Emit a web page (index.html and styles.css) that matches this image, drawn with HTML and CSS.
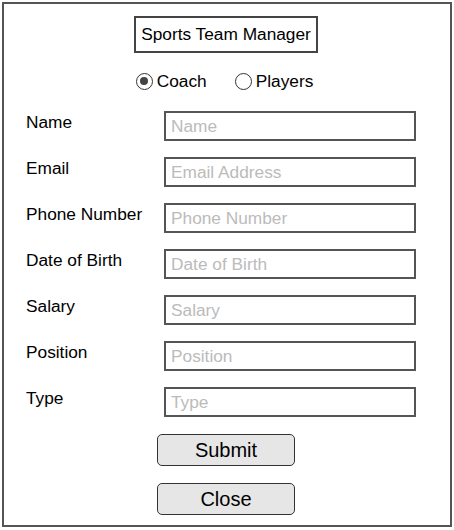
FILE: index.html
```html
<!DOCTYPE html>
<html lang="en">
<head>
    <meta charset="UTF-8">
    <meta name="viewport" content="width=device-width, initial-scale=1.0">
    <title>Sports Team Manager</title>
    <link rel="stylesheet" href="styles.css">
</head>
<body>
    <div class="frame">
        <div class="title">Sports Team Manager</div>

        <div class="roles">
            <label class="role"><span class="radio checked"></span>Coach</label>
            <label class="role"><span class="radio"></span>Players</label>
        </div>

        <form class="form">
            <div class="row">
                <label class="field-label">Name</label>
                <input type="text" class="field" placeholder="Name">
            </div>
            <div class="row">
                <label class="field-label">Email</label>
                <input type="text" class="field" placeholder="Email Address">
            </div>
            <div class="row">
                <label class="field-label">Phone Number</label>
                <input type="text" class="field" placeholder="Phone Number">
            </div>
            <div class="row">
                <label class="field-label">Date of Birth</label>
                <input type="text" class="field" placeholder="Date of Birth">
            </div>
            <div class="row">
                <label class="field-label">Salary</label>
                <input type="text" class="field" placeholder="Salary">
            </div>
            <div class="row">
                <label class="field-label">Position</label>
                <input type="text" class="field" placeholder="Position">
            </div>
            <div class="row">
                <label class="field-label">Type</label>
                <input type="text" class="field" placeholder="Type">
            </div>

            <div class="actions">
                <button type="submit" class="btn">Submit</button>
                <button type="button" class="btn">Close</button>
            </div>
        </form>
    </div>
</body>
</html>
```

FILE: styles.css
```css
body {
    margin: 0;
    font-family: "Liberation Sans", Arial, sans-serif;
    color: #000;
    background-color: white;
}
.frame {
    margin: 2px;
    height: 525px;
    box-sizing: border-box;
    border: 2px solid #555;
    padding: 12px 0 0 22px;
    display: flex;
    flex-direction: column;
}
.title {
    align-self: center;
    margin-left: -24px;
    border: 2px solid #444;
    padding: 6px 5px 7px 5px;
    font-size: 17.3px;
    line-height: 20px;
}
.roles {
    display: flex;
    justify-content: center;
    gap: 28px;
    margin: 18px 0 0 -27px;
    font-size: 17.3px;
    line-height: 20px;
}
.role {
    display: flex;
    align-items: center;
    gap: 4px;
}
.radio {
    width: 17px;
    height: 17px;
    box-sizing: border-box;
    border: 1.5px solid #333;
    border-radius: 50%;
    display: flex;
    align-items: center;
    justify-content: center;
}
.radio.checked::after {
    content: "";
    width: 8px;
    height: 8px;
    border-radius: 50%;
    background-color: #444;
}
.form {
    margin-top: 20px;
    display: flex;
    flex-direction: column;
    gap: 16px;
}
.row {
    display: flex;
    align-items: flex-start;
}
.field-label {
    width: 138px;
    padding-top: 1px;
    font-size: 17.3px;
    line-height: 20px;
}
.field {
    width: 252px;
    height: 30px;
    box-sizing: border-box;
    margin: 0;
    border: 2px solid #555;
    border-radius: 0;
    padding: 0 5px;
    font-family: "Liberation Sans", Arial, sans-serif;
    font-size: 17.3px;
}
.field::placeholder {
    color: #bbb;
}
.actions {
    margin: 1px 0 0 -24px;
    display: flex;
    flex-direction: column;
    align-items: center;
    gap: 17px;
}
.btn {
    width: 138px;
    height: 32px;
    border: 1px solid #333;
    border-radius: 5px;
    background-color: #e6e6e6;
    font-family: "Liberation Sans", Arial, sans-serif;
    font-size: 20px;
    color: #000;
    padding: 0;
    cursor: pointer;
}
```
